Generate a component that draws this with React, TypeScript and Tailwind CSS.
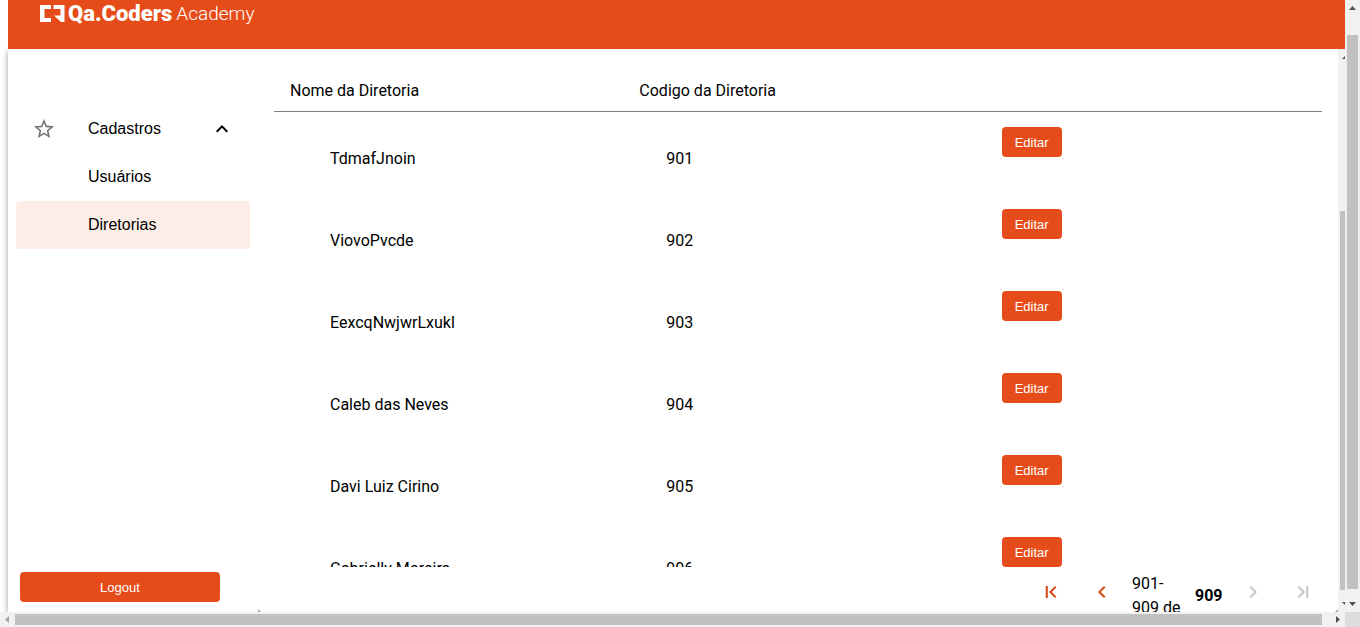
import React from "react";

const rows = [
  { name: "TdmafJnoin", code: "901" },
  { name: "ViovoPvcde", code: "902" },
  { name: "EexcqNwjwrLxukl", code: "903" },
  { name: "Caleb das Neves", code: "904" },
  { name: "Davi Luiz Cirino", code: "905" },
  { name: "Gabrielly Moreira", code: "906" },
];

function Icon({ d, className }: { d: string; className: string }) {
  return (
    <svg viewBox="0 0 24 24" className={`size-6 shrink-0 ${className}`} fill="currentColor" aria-hidden="true">
      <path d={d} />
    </svg>
  );
}

function Header() {
  return (
    <header className="relative z-10 ml-2 h-[49px] shrink-0 bg-[#e64c19] pl-8 text-white">
      <div className="flex h-[26px] items-center">
        <svg viewBox="0 0 25 17" className="mr-[3px] h-[17px] w-[25px]" fill="currentColor" aria-hidden="true">
          <path d="M0 0h11v4H4.500v9H11v4H0zM13.500 0h11v17h-3.500l-7-6.500h6.500V4h-7z" />
        </svg>
        <span className="text-[22px] font-black">Qa.Coders</span>
        <span className="ml-1 pt-0.5 text-[19px] font-light">Academy</span>
      </div>
    </header>
  );
}

function Sidebar() {
  return (
    <aside className="flex w-[250px] shrink-0 flex-col pb-2.5 pl-2 pt-14 font-['Liberation_Sans',sans-serif]">
      <nav className="pr-2">
        <button type="button" className="flex h-12 w-full items-center px-4 text-left">
          <Icon
            className="text-[#757575]"
            d="M22 9.24l-7.19-.62L12 2 9.19 8.63 2 9.24l5.46 4.73L5.82 21 12 17.27 18.18 21l-1.63-7.03L22 9.24zM12 15.4l-3.76 2.27 1-4.28-3.32-2.88 4.38-.38L12 6.1l1.71 4.04 4.38.38-3.32 2.88 1 4.28L12 15.4z"
          />
          <span className="ml-8 flex-1">Cadastros</span>
          <Icon className="text-black" d="M12 8l-6 6 1.41 1.41L12 10.83l4.59 4.58L18 14z" />
        </button>
        <a href="#usuarios" className="flex h-12 items-center pl-18">Usuários</a>
        <a href="#diretorias" className="flex h-12 items-center rounded bg-[#fcede7] pl-18">Diretorias</a>
      </nav>
      <button type="button" className="ml-1 mt-auto h-[30px] w-[200px] rounded bg-[#e64c19] pt-0.5 text-[13px] text-white">
        Logout
      </button>
    </aside>
  );
}

function Pagination() {
  return (
    <div className="flex h-[45px] shrink-0 items-start overflow-hidden pl-[765px]">
      <button type="button" aria-label="Primeira página" className="mt-[13px]">
        <Icon className="text-[#d84315]" d="M17.400 16.59L12.8 12l4.600-4.590L16 6l-6 6 6 6zM6.800 6h2v12h-2z" />
      </button>
      <button type="button" aria-label="Página anterior" className="ml-[27px] mt-[13px]">
        <Icon className="text-[#d84315]" d="M15.41 7.41L14 6l-6 6 6 6 1.41-1.41L10.83 12z" />
      </button>
      <p className="ml-[18px] mt-[5px] w-[52px]">901-909 de</p>
      <strong className="ml-[11px] mt-[17px] font-bold">909</strong>
      <button type="button" disabled aria-label="Próxima página" className="ml-[18px] mt-[13px]">
        <Icon className="text-[#c4c4c4]" d="M10 6L8.59 7.41 13.17 12l-4.58 4.59L10 18l6-6z" />
      </button>
      <button type="button" disabled aria-label="Última página" className="ml-[26px] mt-[13px]">
        <Icon className="text-[#c4c4c4]" d="M6.700 7.41L11.3 12l-4.600 4.590L8.100 18l6-6-6-6zM15.200 6h2v12h-2z" />
      </button>
    </div>
  );
}

function Directories() {
  return (
    <main className="relative flex min-w-0 flex-1 flex-col pl-4 pr-4">
      <div className="min-h-0 flex-1 overflow-hidden pt-5">
        <table className="w-full table-fixed border-separate border-spacing-0 text-left">
          <colgroup>
            <col className="w-1/3" />
            <col className="w-1/3" />
            <col />
          </colgroup>
          <thead>
            <tr className="h-[43px]">
              <th className="border-b border-[#808080] pb-0 pl-4 pt-0.5 font-normal">Nome da Diretoria</th>
              <th className="border-b border-[#808080] pb-0 pl-4 pt-0.5 font-normal">Codigo da Diretoria</th>
              <th className="border-b border-[#808080]" aria-label="Ações" />
            </tr>
          </thead>
          <tbody>
            {rows.map((row) => (
              <tr key={row.code} className="h-[82px]">
                <td className="pb-0 pl-14 pt-3">{row.name}</td>
                <td className="pb-0 pl-[43px] pt-3">{row.code}</td>
                <td className="pl-[29px] pt-[15px] align-top">
                  <button
                    type="button"
                    className="block h-[30px] w-[60px] rounded bg-[#e64c19] pt-0.5 font-['Liberation_Sans',sans-serif] text-[13px] text-white"
                  >
                    Editar
                  </button>
                </td>
              </tr>
            ))}
          </tbody>
        </table>
      </div>
      <Pagination />
      <svg viewBox="0 0 3 3" className="absolute bottom-0 left-0 size-[3px]" fill="#a3a3a3" aria-hidden="true">
        <path d="M0 0l3 3H0z" />
      </svg>
      <svg viewBox="0 0 3 3" className="absolute bottom-0 right-0 size-[3px]" fill="#a3a3a3" aria-hidden="true">
        <path d="M3 0v3H0z" />
      </svg>
    </main>
  );
}

function InnerScrollbar() {
  return (
    <div className="flex w-[7px] shrink-0 flex-col bg-[#f1f1f1] pl-0.5" aria-hidden="true">
      <svg viewBox="0 0 5 15" className="h-[15px] w-[5px]" fill="#505050">
        <path d="M2 10l3-3v3z" />
      </svg>
      <div className="h-[147px]" />
      <div className="flex-1 bg-[#c1c1c1]" />
      <svg viewBox="0 0 5 22" className="h-[22px] w-[5px]" fill="#505050">
        <path d="M2 12h3v3z" />
      </svg>
    </div>
  );
}

function VerticalScrollbar() {
  return (
    <div className="flex w-[15px] shrink-0 flex-col bg-[#f1f1f1] px-0.5" aria-hidden="true">
      <svg viewBox="0 0 11 15" className="h-[15px] w-[11px]" fill="#505050">
        <path d="M2 10l3.500-4 3.500 4z" />
      </svg>
      <div className="h-5" />
      <div className="flex-1 bg-[#c1c1c1]" />
      <svg viewBox="0 0 11 23" className="h-[23px] w-[11px]" fill="#505050">
        <path d="M2 13l3.500 4 3.500-4z" />
      </svg>
    </div>
  );
}

function HorizontalScrollbar() {
  return (
    <div className="flex h-[15px] shrink-0" aria-hidden="true">
      <div className="flex flex-1 bg-[#f1f1f1] py-0.5">
        <svg viewBox="0 0 15 11" className="h-[11px] w-[15px]" fill="#a3a3a3">
          <path d="M9 2L5 5.500 9 9z" />
        </svg>
        <div className="flex-1 bg-[#c1c1c1]" />
        <svg viewBox="0 0 23 11" className="h-[11px] w-[23px]" fill="#505050">
          <path d="M14 2l4 3.500L14 9z" />
        </svg>
      </div>
      <div className="w-[15px] bg-[#dcdcdc]" />
    </div>
  );
}

export default function App() {
  return (
    <div className="flex h-screen flex-col overflow-hidden bg-white font-[Roboto,sans-serif] text-base text-black">
      <div className="flex min-h-0 flex-1">
        <div className="flex min-w-0 flex-1 flex-col overflow-hidden">
          <Header />
          <div className="ml-2 flex min-h-0 flex-1 bg-white shadow-[0_2px_6px_rgba(0,0,0,0.4)]">
            <Sidebar />
            <Directories />
            <InnerScrollbar />
          </div>
        </div>
        <VerticalScrollbar />
      </div>
      <HorizontalScrollbar />
    </div>
  );
}
